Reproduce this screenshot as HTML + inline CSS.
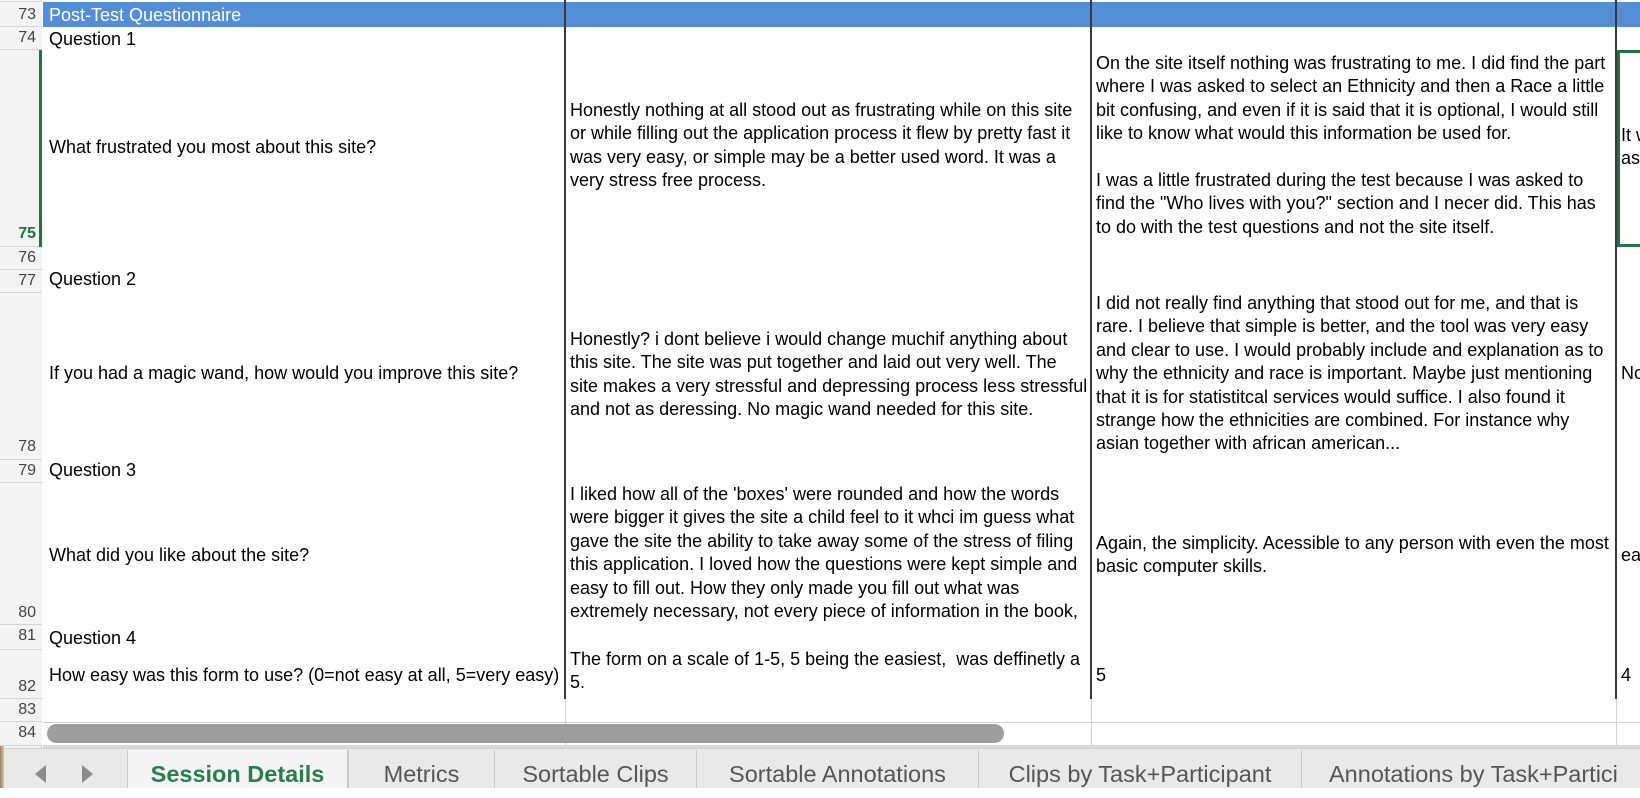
<!DOCTYPE html>
<html><head><meta charset="utf-8"><style>
*{margin:0;padding:0;box-sizing:border-box}
body{width:1640px;height:788px;overflow:hidden;background:#fff;font-family:"Liberation Sans",Arial,sans-serif;font-size:18px;color:#000;position:relative}
.a{position:absolute;white-space:nowrap;line-height:23.4px}
.rh{position:absolute;left:0;width:42px;background:#f3f3f3;border-bottom:1px solid #d4d4d4;text-align:right;padding-right:6px;color:#444;font-size:16px;line-height:22px}
.vl{position:absolute;width:2px;background:#3a3a3a}
.gl{position:absolute;width:1px;background:#d0d0d0}
.tab{position:absolute;top:750px;height:38px;border-left:1px solid #c8c8c8;font-size:23.5px;color:#555;text-align:center;line-height:48px;background:#e9e9e9}
</style></head><body>
<div style="position:absolute;left:0;top:0;width:42px;height:748px;background:#f3f3f3;border-right:1px solid #cfcfcf"></div>
<div style="position:absolute;left:0;top:0;width:4px;height:788px;background:linear-gradient(90deg,#a08060,#d8c8a8)"></div>
<div class="rh" style="top:0;height:2px"></div>
<div class="rh" style="top:2px;height:25px;line-height:26px">73</div>
<div class="rh" style="top:27px;height:23px">74</div>
<div class="rh" style="top:50px;height:197px;padding-top:173px;color:#217346;font-weight:bold">75</div>
<div class="rh" style="top:247px;height:23px">76</div>
<div class="rh" style="top:270px;height:23px">77</div>
<div class="rh" style="top:293px;height:167px;padding-top:143px">78</div>
<div class="rh" style="top:460px;height:23px">79</div>
<div class="rh" style="top:483px;height:142px;padding-top:119px">80</div>
<div class="rh" style="top:625px;height:25px">81</div>
<div class="rh" style="top:650px;height:49px;padding-top:26px">82</div>
<div class="rh" style="top:699px;height:23px">83</div>
<div class="rh" style="top:722px;height:24px">84</div>
<div style="position:absolute;left:39px;top:50px;width:3px;height:197px;background:#217346"></div>

<div style="position:absolute;left:43px;top:2px;width:1597px;height:25px;background:#558ed5"></div>
<div class="a" style="left:49px;top:4px;color:#fff;line-height:23px">Post-Test Questionnaire</div>

<div class="vl" style="left:564px;top:0;height:699px"></div>
<div class="vl" style="left:1090px;top:0;height:699px"></div>
<div class="vl" style="left:1615px;top:0;height:699px"></div>
<div class="gl" style="left:565px;top:699px;height:49px"></div>
<div class="gl" style="left:1091px;top:699px;height:49px"></div>
<div class="gl" style="left:1616px;top:699px;height:49px"></div>
<div style="position:absolute;left:43px;top:722px;width:1597px;height:1px;background:#d0d0d0"></div>
<div style="position:absolute;left:43px;top:745px;width:1597px;height:3px;background:#d8d8d8"></div>

<div style="position:absolute;left:1617px;top:50px;width:30px;height:197px;border:3px solid #217346;border-right:none"></div>

<div class="a" style="left:49px;top:28px">Question 1</div>
<div class="a" style="left:49px;top:136px">What frustrated you most about this site?</div>
<div class="a" style="left:49px;top:268px">Question 2</div>
<div class="a" style="left:49px;top:362px">If you had a magic wand, how would you improve this site?</div>
<div class="a" style="left:49px;top:459px">Question 3</div>
<div class="a" style="left:49px;top:544px">What did you like about the site?</div>
<div class="a" style="left:49px;top:627px">Question 4</div>
<div class="a" style="left:49px;top:664px">How easy was this form to use? (0=not easy at all, 5=very easy)</div>

<div class="a" style="left:570px;top:99px">Honestly nothing at all stood out as frustrating while on this site<br>or while filling out the application process it flew by pretty fast it<br>was very easy, or simple may be a better used word. It was a<br>very stress free process.</div>
<div class="a" style="left:570px;top:328px">Honestly? i dont believe i would change muchif anything about<br>this site. The site was put together and laid out very well. The<br>site makes a very stressful and depressing process less stressful<br>and not as deressing. No magic wand needed for this site.</div>
<div class="a" style="left:570px;top:483px">I liked how all of the 'boxes' were rounded and how the words<br>were bigger it gives the site a child feel to it whci im guess what<br>gave the site the ability to take away some of the stress of filing<br>this application. I loved how the questions were kept simple and<br>easy to fill out. How they only made you fill out what was<br>extremely necessary, not every piece of information in the book,</div>
<div class="a" style="left:570px;top:648px">The form on a scale of 1-5, 5 being the easiest,&nbsp; was deffinetly a<br>5.</div>

<div class="a" style="left:1096px;top:52px">On the site itself nothing was frustrating to me. I did find the part<br>where I was asked to select an Ethnicity and then a Race a little<br>bit confusing, and even if it is said that it is optional, I would still<br>like to know what would this information be used for.<br><br>I was a little frustrated during the test because I was asked to<br>find the "Who lives with you?" section and I necer did. This has<br>to do with the test questions and not the site itself.</div>
<div class="a" style="left:1096px;top:292px">I did not really find anything that stood out for me, and that is<br>rare. I believe that simple is better, and the tool was very easy<br>and clear to use. I would probably include and explanation as to<br>why the ethnicity and race is important. Maybe just mentioning<br>that it is for statistitcal services would suffice. I also found it<br>strange how the ethnicities are combined. For instance why<br>asian together with african american...</div>
<div class="a" style="left:1096px;top:532px">Again, the simplicity. Acessible to any person with even the most<br>basic computer skills.</div>
<div class="a" style="left:1096px;top:664px">5</div>

<div class="a" style="left:1621px;top:124px">It w<br>as</div>
<div class="a" style="left:1621px;top:362px">No</div>
<div class="a" style="left:1621px;top:544px">ea</div>
<div class="a" style="left:1621px;top:664px">4</div>

<div style="position:absolute;left:47px;top:724px;width:957px;height:19px;border-radius:10px;background:#9e9e9e"></div>

<div style="position:absolute;left:4px;top:748px;width:1636px;height:40px;background:#e9e9e9;border-top:1px solid #cfcfcf"></div>
<svg style="position:absolute;left:30px;top:763px" width="70" height="22"><polygon points="16,2 16,20 5,11" fill="#8a8a8a"/><polygon points="52,2 52,20 63,11" fill="#8a8a8a"/></svg>
<div class="tab" style="left:127px;width:221px;background:#f4f4f4;color:#2b7d4f;font-weight:bold;border-right:1px solid #c8c8c8">Session Details</div>
<div class="tab" style="left:348px;width:146px">Metrics</div>
<div class="tab" style="left:494px;width:202px">Sortable Clips</div>
<div class="tab" style="left:696px;width:282px">Sortable Annotations</div>
<div class="tab" style="left:978px;width:323px">Clips by Task+Participant</div>
<div class="tab" style="left:1301px;width:339px;text-align:left;padding-left:27px">Annotations by Task+Partici</div>
</body></html>
